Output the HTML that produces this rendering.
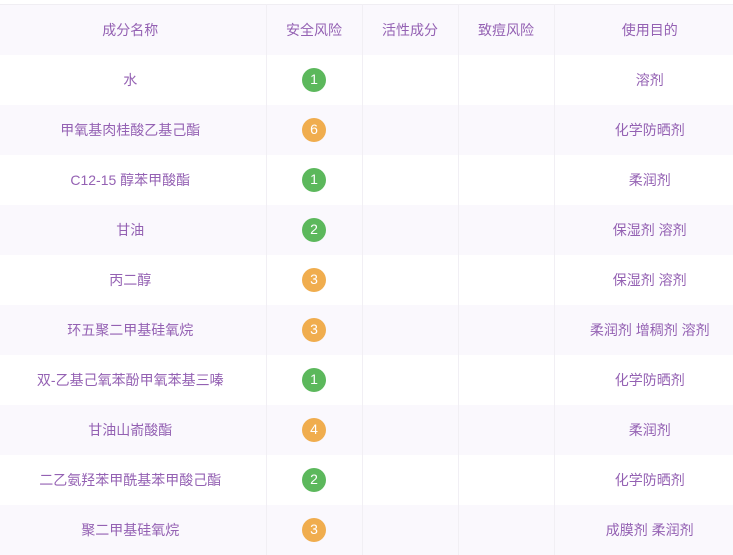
<!DOCTYPE html>
<html><head><meta charset="utf-8"><style>
html,body{margin:0;padding:0;width:733px;height:554px;overflow:hidden;background:#fff}
table{position:absolute;top:4px;left:0;border-collapse:collapse;table-layout:fixed;width:745px;border-top:1px solid #f0eef3;
font-family:"Liberation Sans","Noto Sans CJK SC",sans-serif;font-size:14px;color:#9461b3}
td{height:50px;padding:0;text-align:center;border-left:1px solid #f1eff4;vertical-align:middle}
td:first-child{border-left:none;padding-right:5px}
tr:nth-child(odd) td{background:#faf8fd}
tr:nth-child(even) td{background:#fff}
.b{display:inline-block;width:24px;height:24px;border-radius:50%;color:#fff;line-height:23px;font-size:14px}
.g{background:#5cb85c}.o{background:#f0ad4e}
</style></head><body>
<table>
<colgroup><col style="width:266px"><col style="width:96px"><col style="width:96px"><col style="width:96px"><col style="width:191px"></colgroup>
<tr><td>成分名称</td><td>安全风险</td><td>活性成分</td><td>致痘风险</td><td>使用目的</td></tr>
<tr><td>水</td><td><span class="b g">1</span></td><td></td><td></td><td>溶剂</td></tr>
<tr><td>甲氧基肉桂酸乙基己酯</td><td><span class="b o">6</span></td><td></td><td></td><td>化学防晒剂</td></tr>
<tr><td>C12-15 醇苯甲酸酯</td><td><span class="b g">1</span></td><td></td><td></td><td>柔润剂</td></tr>
<tr><td>甘油</td><td><span class="b g">2</span></td><td></td><td></td><td>保湿剂 溶剂</td></tr>
<tr><td>丙二醇</td><td><span class="b o">3</span></td><td></td><td></td><td>保湿剂 溶剂</td></tr>
<tr><td>环五聚二甲基硅氧烷</td><td><span class="b o">3</span></td><td></td><td></td><td>柔润剂 增稠剂 溶剂</td></tr>
<tr><td>双-乙基己氧苯酚甲氧苯基三嗪</td><td><span class="b g">1</span></td><td></td><td></td><td>化学防晒剂</td></tr>
<tr><td>甘油山嵛酸酯</td><td><span class="b o">4</span></td><td></td><td></td><td>柔润剂</td></tr>
<tr><td>二乙氨羟苯甲酰基苯甲酸己酯</td><td><span class="b g">2</span></td><td></td><td></td><td>化学防晒剂</td></tr>
<tr><td>聚二甲基硅氧烷</td><td><span class="b o">3</span></td><td></td><td></td><td>成膜剂 柔润剂</td></tr>
</table>
</body></html>
